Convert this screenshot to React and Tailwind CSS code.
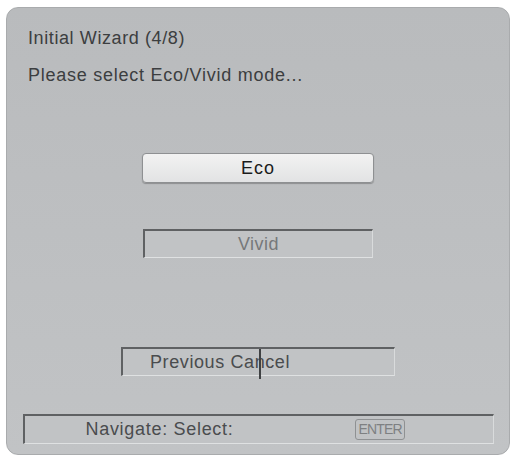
import React from 'react';

const font = { fontFamily: '"Liberation Sans", Arial, sans-serif' };

// Sunken field used by the Vivid option, the Previous/Cancel row and the hint bar
const Inset = ({ className = '', children }) => (
  <div
    className={`relative mx-auto border-t-2 border-l-2 border-r border-b border-t-[#5f6163] border-l-[#5f6163] border-r-[#d9dbdc] border-b-[#dfe1e2] bg-[#c1c3c5] ${className}`}
  >
    {children}
  </div>
);

export default function App() {
  return (
    <div className="w-[515px] h-[459px] bg-white p-[6px] pt-[7px]" style={font}>
      <div className="h-[448px] w-[504px] rounded-[12px] border border-[#a9abad] bg-gradient-to-b from-[#b9bbbd] to-[#c1c3c5] pt-[20px] flex flex-col">
        <div className="pl-[21px] text-[18px] leading-[20px] tracking-[0.6px] text-[#3c3e40]">Initial Wizard (4/8)</div>
        <div className="mt-[17px] pl-[21px] text-[18px] leading-[20px] tracking-[0.75px] text-[#3c3e40]">
          Please select Eco/Vivid mode...
        </div>

        <div className="mx-auto mt-[68px] flex h-[30px] w-[232px] items-center justify-center rounded-[4px] border border-[#8e9092] bg-gradient-to-b from-[#f2f2f2] to-[#e2e3e4] text-[18px] tracking-[1px] text-[#1c1c1c] shadow-[0_1px_1px_rgba(0,0,0,0.25)]">
          Eco
        </div>

        <Inset className="mt-[46px] flex h-[29px] w-[230px] items-center justify-center text-[18px] tracking-[0.5px] text-[#76787a]">
          Vivid
        </Inset>

        <Inset className="mt-[89px] flex h-[29px] w-[274px] items-center pl-[27px] text-[18px] tracking-[0.6px] text-[#4a4c4e]">
          Previous Cancel
          <span className="absolute left-[136px] top-0 h-[30px] w-[2px] bg-[#3f4143]" />
        </Inset>

        <Inset className="mt-[38px] flex h-[30px] w-[471px] items-center text-[18px] tracking-[0.7px] text-[#4a4c4e]">
          <span className="pl-[61px]">Navigate: Select:</span>
          <span className="ml-[122px] rounded-[3px] border border-[#8f9193] px-[2px] text-[14px] leading-[19px] tracking-[-0.8px] text-[#7e8082]">
            ENTER
          </span>
        </Inset>
      </div>
    </div>
  );
}
